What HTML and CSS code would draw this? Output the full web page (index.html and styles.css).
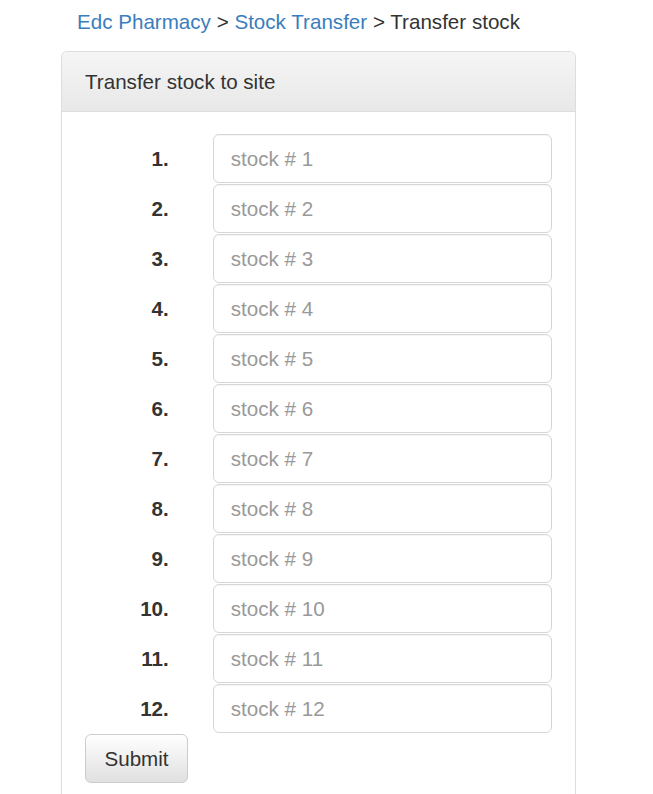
FILE: index.html
```html
<!DOCTYPE html>
<html>
<head>
<meta charset="utf-8">
<link rel="stylesheet" href="styles.css">
</head>
<body>
<div class="crumbs"><a href="#">Edc Pharmacy</a> &gt; <a href="#">Stock Transfer</a> &gt; Transfer stock</div>
<div class="panel">
  <div class="panel-heading">Transfer stock to site</div>
  <div class="panel-body">
    <div class="row"><label>1.</label><input type="text" placeholder="stock # 1"></div>
    <div class="row"><label>2.</label><input type="text" placeholder="stock # 2"></div>
    <div class="row"><label>3.</label><input type="text" placeholder="stock # 3"></div>
    <div class="row"><label>4.</label><input type="text" placeholder="stock # 4"></div>
    <div class="row"><label>5.</label><input type="text" placeholder="stock # 5"></div>
    <div class="row"><label>6.</label><input type="text" placeholder="stock # 6"></div>
    <div class="row"><label>7.</label><input type="text" placeholder="stock # 7"></div>
    <div class="row"><label>8.</label><input type="text" placeholder="stock # 8"></div>
    <div class="row"><label>9.</label><input type="text" placeholder="stock # 9"></div>
    <div class="row"><label>10.</label><input type="text" placeholder="stock # 10"></div>
    <div class="row"><label>11.</label><input type="text" placeholder="stock # 11"></div>
    <div class="row"><label>12.</label><input type="text" placeholder="stock # 12"></div>
    <button class="btn" type="button">Submit</button>
  </div>
</div>
</body>
</html>
```
FILE: styles.css
```css
html, body {
  margin: 0;
  padding: 0;
  background: #fff;
  font-family: "Liberation Sans", Arial, sans-serif;
  font-size: 20.6px;
  color: #333;
}
.crumbs {
  padding: 9px 0 0 77px;
  height: 51px;
  line-height: 26px;
  box-sizing: border-box;
}
.crumbs a {
  color: #3a7dbd;
  text-decoration: none;
}
.panel {
  margin-left: 61px;
  width: 515px;
  border: 1px solid #ddd;
  border-bottom: none;
  border-radius: 6px 6px 0 0;
  box-sizing: border-box;
  height: 760px;
}
.panel-heading {
  height: 60px;
  box-sizing: border-box;
  padding: 0 23px;
  display: flex;
  align-items: center;
  background: linear-gradient(#f5f5f5, #e8e8e8);
  border-bottom: 1px solid #ddd;
  border-radius: 5px 5px 0 0;
  color: #333;
}
.panel-body {
  padding: 22px 23px 0 23px;
}
.row {
  display: flex;
  align-items: center;
  height: 49px;
  margin-bottom: 1px;
}
.row label {
  width: 84px;
  text-align: right;
  font-weight: bold;
  margin-right: 44px;
  color: #333;
}
.row input {
  width: 340px;
  height: 49px;
  box-sizing: border-box;
  border: 1px solid #d6d6d6;
  border-radius: 6px;
  padding: 0 17px;
  font-family: inherit;
  font-size: 20.6px;
  color: #333;
  box-shadow: inset 0 1px 1px rgba(0,0,0,0.04);
  outline: none;
}
.row input::placeholder {
  color: #999;
}
.btn {
  width: 103px;
  height: 49px;
  box-sizing: border-box;
  border: 1px solid #ccc;
  border-radius: 6px;
  background: linear-gradient(#fff, #e0e0e0);
  font-family: inherit;
  font-size: 20.6px;
  color: #333;
  padding: 0;
}
```
